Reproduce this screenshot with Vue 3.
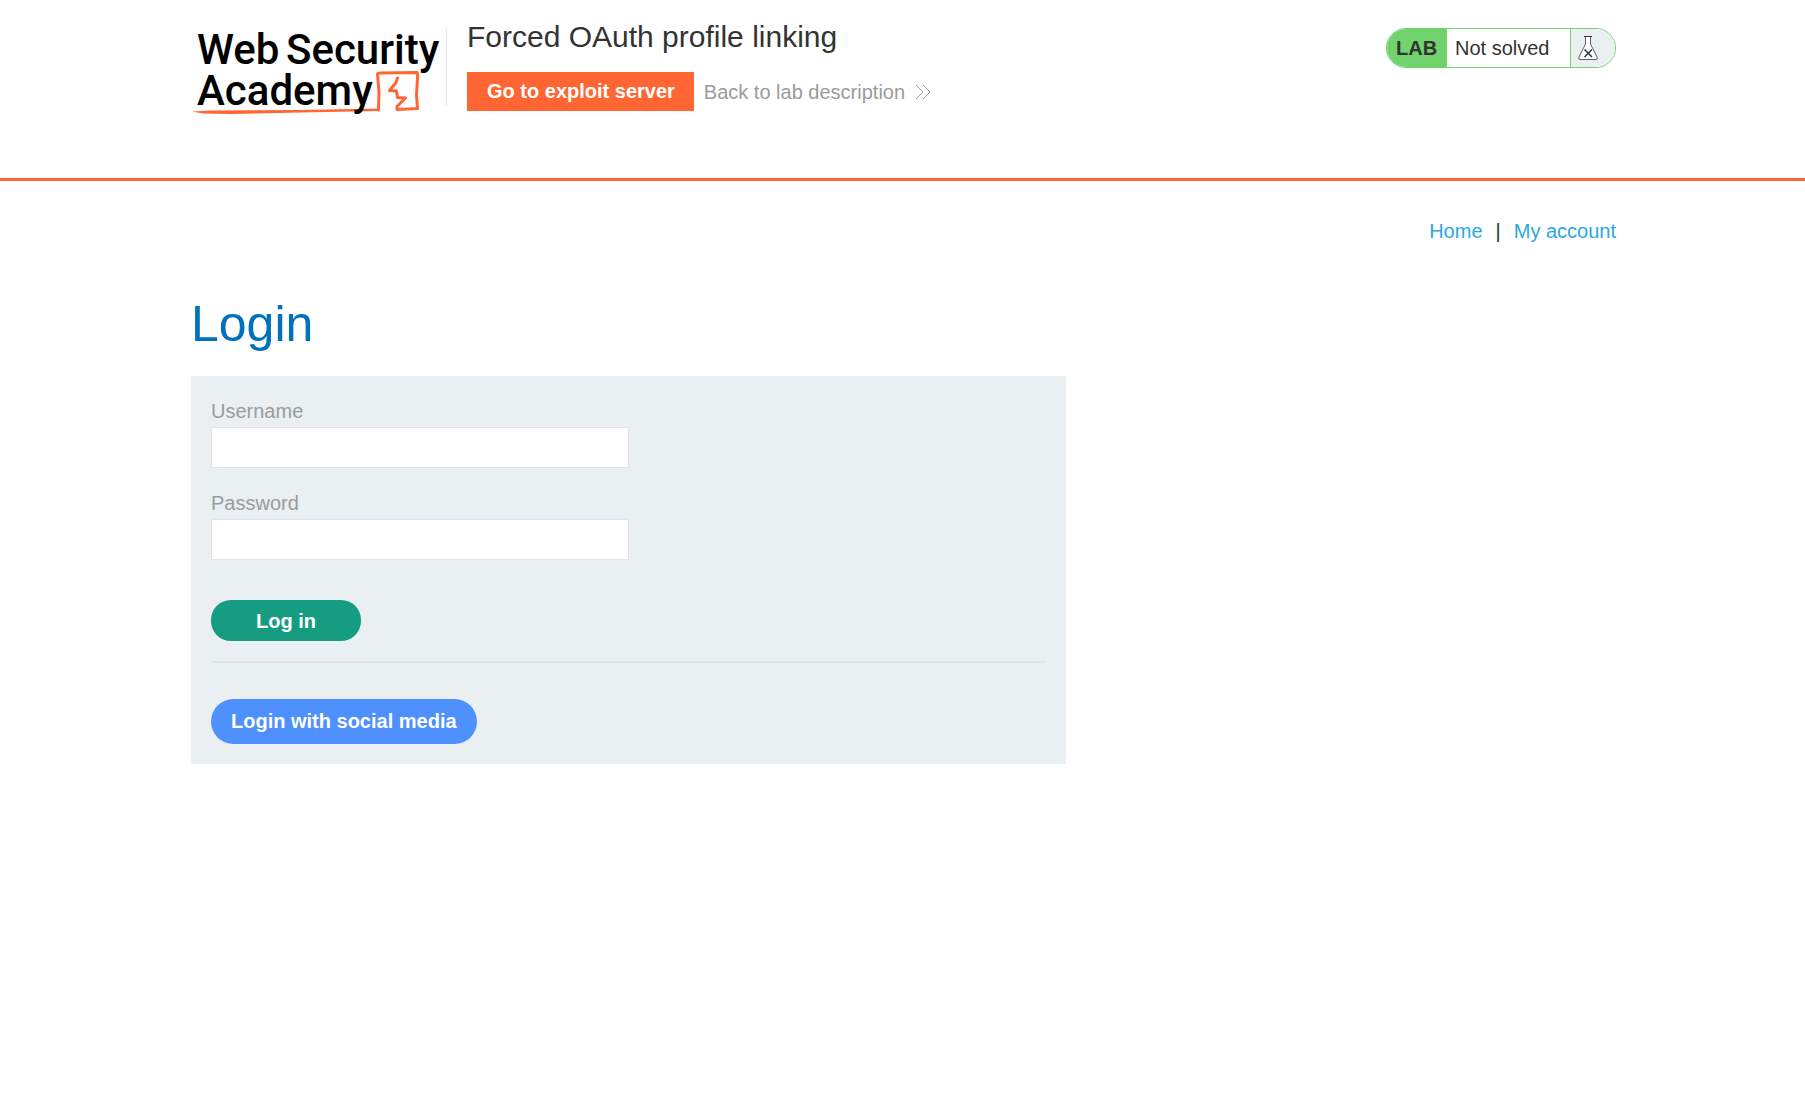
<script setup>
import { ref } from 'vue'

const username = ref('')
const password = ref('')
</script>

<template>
  <div class="page">
    <header class="header">
      <a class="logo" href="#" aria-label="Web Security Academy">
        <svg width="255" height="100" viewBox="0 0 255 100">
          <path d="M1 91.5 L20 90.500 L110 90 L188 88.500 L188 91 L110 92.500 L40 94 L12 93.500 Z" fill="#ff6633" />
          <path d="M187.500 90 L188 72 L186.500 54 Q187 53 190 53 L226 52.500 Q227 53 226.500 58 L225.500 75 L226.500 88.500 L206 89.500 L206 86.500 L214.500 78 L206.500 77.500 L205.500 71 L198.500 70.500 L205 62.500 L206.500 58" fill="none" stroke="#ff6633" stroke-width="3" stroke-linejoin="round" stroke-linecap="round" />
          <text class="logo-text" x="6" y="44">Web</text>
          <text class="logo-text" x="95" y="44">Security</text>
          <text class="logo-text" x="6" y="85">Academy</text>
        </svg>
      </a>
      <div class="title">
        <h2>Forced OAuth profile linking</h2>
        <div class="links">
          <a class="exploit" href="#">Go to exploit server</a>
          <a class="back" href="#">
            Back to lab description
            <svg width="16" height="16" viewBox="0 0 16 16" fill="none" stroke="#9b9b9b" stroke-width="1">
              <path d="M1 1 L8 8 L1 15 M8 1 L15 8 L8 15" />
            </svg>
          </a>
        </div>
      </div>
      <div class="status">
        <span class="lab">LAB</span>
        <span class="state">Not solved</span>
        <span class="flask">
          <svg width="20" height="26" viewBox="0 0 20 26" stroke="#333332">
            <path d="M7.500 2 V9 L1 22 Q0 24.500 2 24.500 H18 Q20 24.500 19 22 L12.500 9 V2" fill="#fff" stroke-width="0.8" />
            <path d="M6 1.500 H14" fill="none" stroke-width="1.200" />
            <path d="M6.500 14.500 L14 22 M14 14.500 L6.500 22" fill="none" stroke-width="1.500" />
          </svg>
        </span>
      </div>
    </header>

    <main class="content">
      <nav class="nav">
        <a href="#">Home</a>
        <span>|</span>
        <a href="#">My account</a>
      </nav>
      <h1>Login</h1>
      <section class="panel">
        <form @submit.prevent>
          <label for="username">Username</label>
          <input id="username" v-model="username" type="text" name="username" />
          <label for="password">Password</label>
          <input id="password" v-model="password" type="password" name="password" />
          <button type="submit">Log in</button>
        </form>
        <hr />
        <a class="social" href="#">Login with social media</a>
      </section>
    </main>
  </div>
</template>

<style>
body {
  margin: 0;
  background: #fff;
}
</style>

<style scoped>
.page {
  font-family: "Liberation Sans", Arial, sans-serif;
  font-size: 20px;
  line-height: 24px;
  color: #333332;
}

a {
  text-decoration: none;
}

.header {
  display: flex;
  align-items: flex-start;
  box-sizing: border-box;
  min-height: 181px;
  padding: 20px 189px 0 191px;
  border-bottom: 3px solid #ff6633;
}

.logo,
.logo svg {
  display: block;
}

.logo-text {
  font-family: "Roboto", sans-serif;
  font-size: 42px;
  font-weight: 500;
  fill: #000;
}

.title {
  flex: 1;
  display: flex;
  flex-direction: column;
  justify-content: space-between;
  padding-left: 21px;
  background: linear-gradient(#e4e4e4, #e4e4e4) 0 8px / 1px 78px no-repeat;
}

h2 {
  margin: 0;
  font-size: 30px;
  font-weight: 400;
  line-height: 33px;
}

.links {
  display: flex;
  align-items: center;
  gap: 10px;
  margin-top: 19px;
}

.exploit {
  padding: 0 19px 0 20px;
  line-height: 39px;
  font-weight: 700;
  color: #fff;
  background: #ff6633;
}

.back {
  display: flex;
  align-items: center;
  gap: 10px;
  color: #9b9b9b;
}

.status {
  display: flex;
  box-sizing: border-box;
  width: 230px;
  height: 40px;
  margin-top: 8px;
  border: 1px solid #70d36d;
  border-radius: 20px;
  overflow: hidden;
  line-height: 38px;
}

.lab {
  box-sizing: border-box;
  width: 60px;
  padding-left: 9px;
  font-weight: 700;
  background: #70d36d;
}

.state {
  flex: 1;
  padding-left: 8px;
}

.flask {
  display: flex;
  align-items: center;
  width: 37px;
  padding-left: 7px;
  border-left: 1px solid #70d36d;
  background: #eaeff2;
}

.content {
  padding: 38px 189px 40px 191px;
}

.nav {
  display: flex;
  justify-content: flex-end;
  gap: 13px;
}

.nav a {
  color: #29a9e0;
}

h1 {
  margin: 53px 0 23px;
  font-size: 50px;
  font-weight: 400;
  line-height: 57px;
  color: #0071bc;
}

.panel {
  box-sizing: border-box;
  max-width: 875px;
  padding: 20px;
  background: #eaeff2;
}

form {
  display: flex;
  flex-direction: column;
  align-items: flex-start;
}

label {
  padding: 3px 0 4px;
  color: #9b9b9b;
}

input {
  box-sizing: border-box;
  width: 50%;
  height: 41px;
  margin: 0 0 20px;
  padding: 0 10px;
  border: 1px solid #e4e4e4;
  font: inherit;
  background: #fff;
}

button {
  width: 150px;
  height: 41px;
  margin-top: 20px;
  border: 0;
  border-radius: 20px;
  font: inherit;
  font-weight: 700;
  color: #fff;
  background: #169c80;
}

hr {
  height: 2px;
  margin: 20px 0 36px;
  border: 0;
  background: #e4e4e4;
}

.social {
  display: block;
  width: max-content;
  padding: 0 20px;
  border-radius: 23px;
  font-weight: 700;
  line-height: 45px;
  color: #fff;
  background: #4d90fe;
}
</style>
